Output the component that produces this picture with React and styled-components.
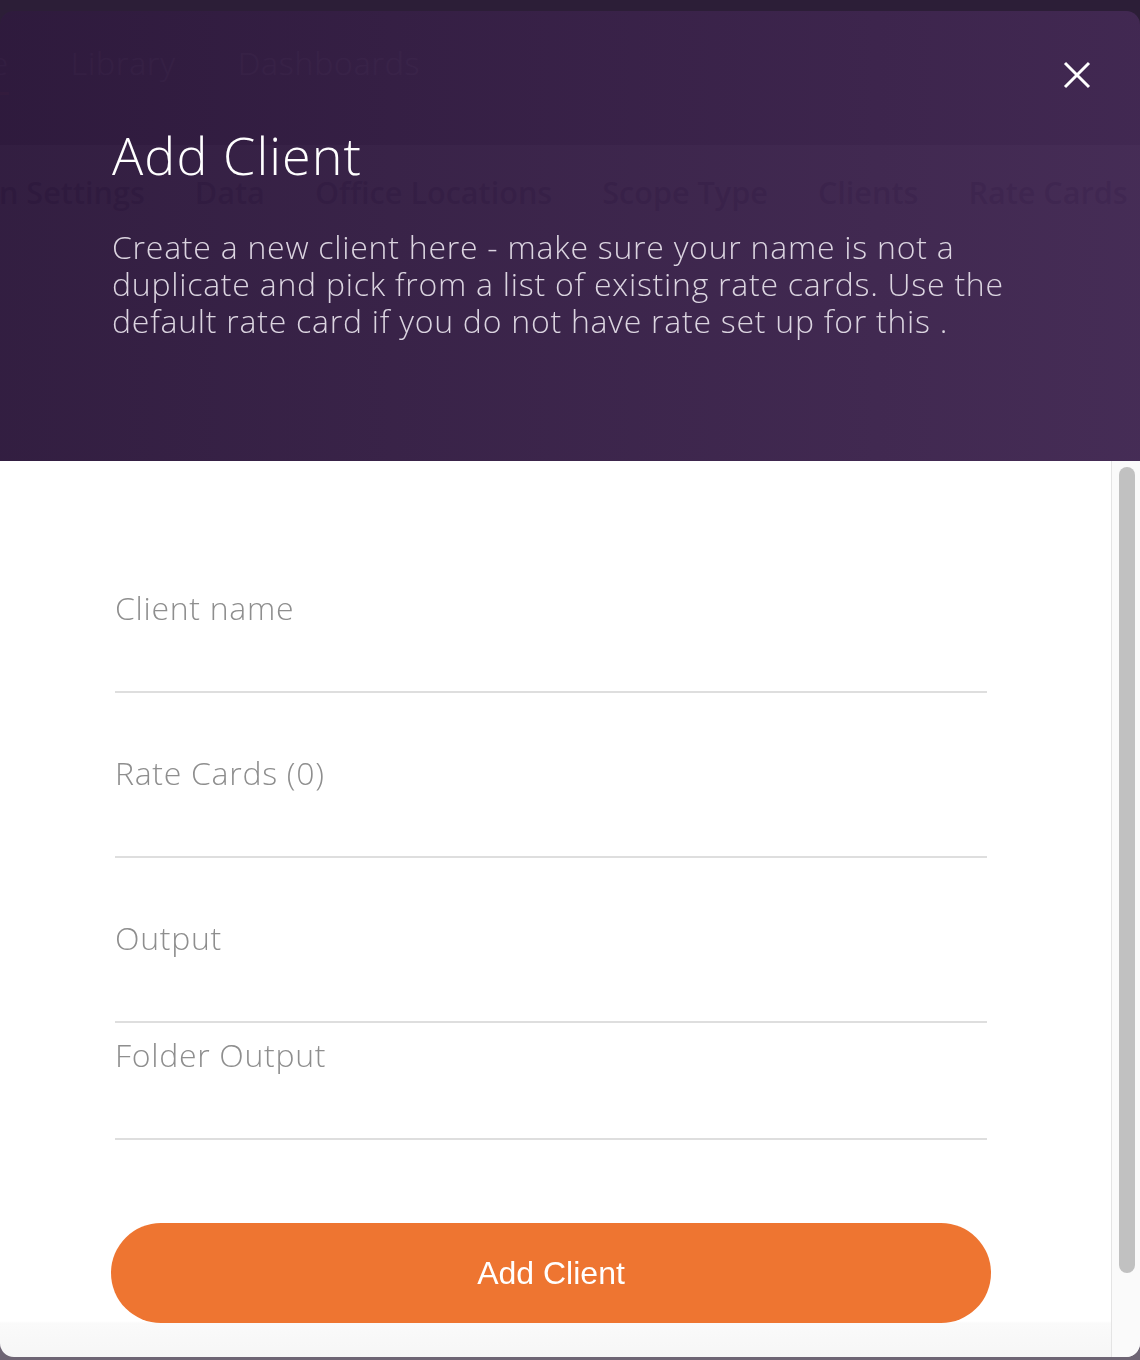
import React from "react";
import styled, { createGlobalStyle } from "styled-components";

const GlobalStyle = createGlobalStyle`
  html, body { margin: 0; padding: 0; height: 100%; overflow: hidden; }
  body { font-family: "Open Sans", "Noto Sans", sans-serif; background: #ebe8ee; }
  *, *::before, *::after { box-sizing: border-box; }
`;

/* ---------- page behind the dialog ---------- */
const Page = styled.div`
  min-height: 1360px;
  background: #ebe8ee;
  overflow: hidden;
`;

const NavBar = styled.nav`
  height: 145px;
  background: #463955;
  overflow: hidden;
`;

const NavList = styled.div`
  display: flex;
  gap: 62px;
  padding-top: 38px;
  margin-left: -82px;
`;

const NavItem = styled.span`
  font-size: 32px;
  line-height: 50px;
  font-weight: 300;
  letter-spacing: 0.8px;
  color: #ffffff;
  white-space: nowrap;
  padding-bottom: 4px;
  border-bottom: 3px solid ${(p) => (p.$active ? "#ee7531" : "transparent")};
`;

const TabBar = styled.div`
  display: flex;
  gap: 50px;
  padding-top: 25px;
  margin-left: -78px;
  white-space: nowrap;
`;

const TabItem = styled.span`
  font-size: 30.6px;
  line-height: 44px;
  font-weight: 600;
  color: #221a2b;
`;

const Overlay = styled.div`
  position: fixed;
  inset: 0;
  background: rgba(27, 14, 35, 0.6);
`;

/* ---------- dialog ---------- */
const Modal = styled.div`
  position: fixed;
  top: 11px;
  left: 0;
  width: 1140px;
  height: 1346px;
  border-radius: 14px;
  overflow: hidden;
  display: flex;
  flex-direction: column;
`;

const Header = styled.header`
  flex: none;
  height: 450px;
  display: flex;
  padding: 50px 49px 0 112px;
  background: linear-gradient(90deg, rgba(47, 26, 62, 0.95), rgba(67, 41, 84, 0.95));
`;

const HeaderText = styled.div`
  flex: 1;
  padding-top: 64px;
`;

const Title = styled.h2`
  margin: 0;
  font-size: 52px;
  line-height: 60px;
  font-weight: 300;
  letter-spacing: 1.1px;
  color: #ffffff;
`;

const Description = styled.p`
  margin: 43px 0 0;
  max-width: 940px;
  font-size: 32px;
  line-height: 37px;
  font-weight: 300;
  letter-spacing: 0.75px;
  color: #dbd4e0;
`;

const CloseButton = styled.button`
  flex: none;
  width: 28px;
  height: 28px;
  padding: 0;
  border: 0;
  background: none;
  cursor: pointer;
  display: block;
`;

const Body = styled.div`
  flex: 1;
  display: flex;
  background: linear-gradient(
    to bottom,
    #ffffff 0,
    #ffffff calc(100% - 36px),
    #fafafa calc(100% - 34px),
    #f6f6f6 100%
  );
`;

const Form = styled.form`
  flex: 1;
  display: flex;
  flex-direction: column;
  padding: 115px 124px 34px 115px;
`;

const Field = styled.label`
  display: block;
  margin-top: ${(p) => (p.$spaced ? "48px" : "0")};
  padding-top: 12px;
  border-bottom: 2px solid #dedede;
`;

const Label = styled.span`
  display: block;
  font-size: 32px;
  line-height: 40px;
  font-weight: 300;
  letter-spacing: 0.7px;
  color: #8e8e8e;
`;

const Input = styled.input`
  display: block;
  width: 100%;
  height: 63px;
  border: 0;
  outline: 0;
  padding: 0;
  background: transparent;
  font-family: inherit;
  font-size: 30px;
  color: #333;
`;

const SubmitButton = styled.button`
  margin: 83px -4px 0;
  height: 100px;
  border: 0;
  border-radius: 50px;
  background: #ee7531;
  color: #ffffff;
  font-family: "Liberation Sans", Arial, sans-serif;
  font-size: 32px;
  cursor: pointer;
`;

const ScrollTrack = styled.div`
  flex: none;
  width: 29px;
  border-left: 1px solid #e4e4e4;
  background: #fafafa;
  padding: 6px 5px 0 7px;
`;

const ScrollThumb = styled.div`
  height: 806px;
  border-radius: 8px;
  background: #c1c1c1;
`;

const CloseIcon = () => (
  <svg width="28" height="28" viewBox="0 0 28 28" fill="none">
    <path d="M2 2 L26 26 M26 2 L2 26" stroke="#ffffff" strokeWidth="3" />
  </svg>
);

const fields = [
  { label: "Client name", spaced: false },
  { label: "Rate Cards (0)", spaced: true },
  { label: "Output", spaced: true },
  { label: "Folder Output", spaced: false },
];

export default function App() {
  return (
    <>
      <GlobalStyle />
      <Page>
        <NavBar>
          <NavList>
            <NavItem $active>Home</NavItem>
            <NavItem>Library</NavItem>
            <NavItem>Dashboards</NavItem>
          </NavList>
        </NavBar>
        <TabBar>
          <TabItem>Admin Settings</TabItem>
          <TabItem>Data</TabItem>
          <TabItem>Office Locations</TabItem>
          <TabItem>Scope Type</TabItem>
          <TabItem>Clients</TabItem>
          <TabItem>Rate Cards</TabItem>
        </TabBar>
      </Page>
      <Overlay />
      <Modal role="dialog" aria-label="Add Client">
        <Header>
          <HeaderText>
            <Title>Add Client</Title>
            <Description>
              Create a new client here - make sure your name is not a duplicate and pick from a
              list of existing rate cards. Use the default rate card if you do not have rate set up
              for this .
            </Description>
          </HeaderText>
          <CloseButton type="button" aria-label="Close">
            <CloseIcon />
          </CloseButton>
        </Header>
        <Body>
          <Form onSubmit={(e) => e.preventDefault()}>
            {fields.map((f) => (
              <Field key={f.label} $spaced={f.spaced}>
                <Label>{f.label}</Label>
                <Input type="text" />
              </Field>
            ))}
            <SubmitButton type="submit">Add Client</SubmitButton>
          </Form>
          <ScrollTrack>
            <ScrollThumb />
          </ScrollTrack>
        </Body>
      </Modal>
    </>
  );
}
